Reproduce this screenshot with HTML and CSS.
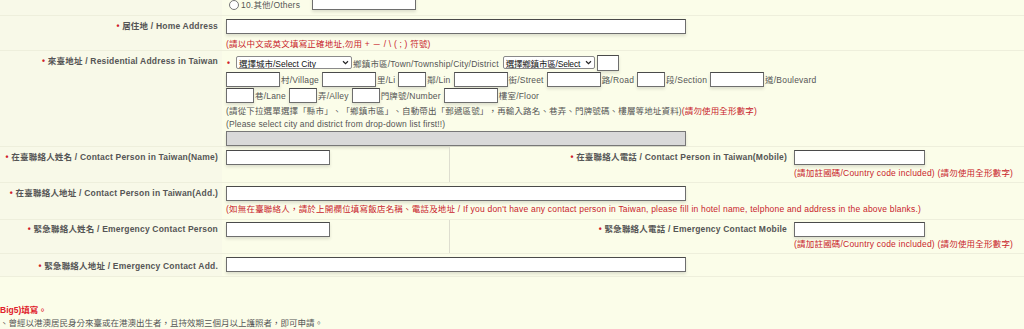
FILE: index.html
```html
<!DOCTYPE html>
<html lang="zh-Hant">
<head>
<meta charset="utf-8">
<link rel="stylesheet" href="styles.css">
</head>
<body>
<div class="form">
  <div class="row row-top">
    <div class="label"></div>
    <div class="value top-value">
      <span class="radio"></span><span class="txt">10.其他/Others</span>
      <span class="input w104 other"></span>
    </div>
  </div>

  <div class="row r-home">
    <div class="label"><span class="star">•</span> 居住地 / Home Address</div>
    <div class="value">
      <div class="input w460"></div>
      <div class="note">(請以中文或英文填寫正確地址,勿用 + － / \ ( ; ) 符號)</div>
    </div>
  </div>

  <div class="row r-res">
    <div class="label"><span class="star">•</span> 來臺地址 / Residential Address in Taiwan</div>
    <div class="value">
      <div class="line l1">
        <span class="star star-v">•</span>
        <span class="select sel-city"><span class="sel-text">選擇城市/Select City</span><svg class="chev" viewBox="0 0 8 6" width="7" height="5"><path d="M1 1.5 L4 4.5 L7 1.5" fill="none" stroke="#222" stroke-width="1.4"/></svg></span>
        <span class="txt">鄉鎮市區/Town/Township/City/District</span>
        <span class="select sel-dist"><span class="sel-text">選擇鄉鎮市區/Select</span><svg class="chev" viewBox="0 0 8 6" width="7" height="5"><path d="M1 1.5 L4 4.5 L7 1.5" fill="none" stroke="#222" stroke-width="1.4"/></svg></span>
        <span class="input w22 zip"></span>
      </div>
      <div class="line">
        <span class="input w54"></span><span class="txt">村/Village</span>
        <span class="input w54"></span><span class="txt">里/Li</span>
        <span class="input w28"></span><span class="txt">鄰/Lin</span>
        <span class="input w54"></span><span class="txt">街/Street</span>
        <span class="input w54"></span><span class="txt">路/Road</span>
        <span class="input w28"></span><span class="txt">段/Section</span>
        <span class="input w54"></span><span class="txt">道/Boulevard</span>
      </div>
      <div class="line">
        <span class="input w28"></span><span class="txt">巷/Lane</span>
        <span class="input w28"></span><span class="txt">弄/Alley</span>
        <span class="input w28"></span><span class="txt">門牌號/Number</span>
        <span class="input w54"></span><span class="txt">樓室/Floor</span>
      </div>
      <div class="help first">(請從下拉選單選擇「縣市」、「鄉鎮市區」、自動帶出「郵遞區號」，再輸入路名、巷弄、門牌號碼、樓層等地址資料)<span class="red">(請勿使用全形數字)</span></div>
      <div class="help">(Please select city and district from drop-down list first!!)</div>
      <div class="input w460 disabled"></div>
    </div>
  </div>

  <div class="row split r-contact">
    <div class="label"><span class="star">•</span> 在臺聯絡人姓名 / Contact Person in Taiwan(Name)</div>
    <div class="value"><div class="input w104"></div></div>
    <div class="label label2"><span class="star">•</span> 在臺聯絡人電話 / Contact Person in Taiwan(Mobile)</div>
    <div class="value">
      <div class="input w131"></div>
      <div class="note">(請加註國碼/Country code included) (請勿使用全形數字)</div>
    </div>
  </div>

  <div class="row r-cadd">
    <div class="label"><span class="star">•</span> 在臺聯絡人地址 / Contact Person in Taiwan(Add.)</div>
    <div class="value">
      <div class="input w460"></div>
      <div class="note">(如無在臺聯絡人，請於上開欄位填寫飯店名稱、電話及地址 / If you don't have any contact person in Taiwan, please fill in hotel name, telphone and address in the above blanks.)</div>
    </div>
  </div>

  <div class="row split r-emer">
    <div class="label"><span class="star">•</span> 緊急聯絡人姓名 / Emergency Contact Person</div>
    <div class="value"><div class="input w104"></div></div>
    <div class="label label2"><span class="star">•</span> 緊急聯絡人電話 / Emergency Contact Mobile</div>
    <div class="value">
      <div class="input w131"></div>
      <div class="note">(請加註國碼/Country code included) (請勿使用全形數字)</div>
    </div>
  </div>

  <div class="row r-eadd">
    <div class="label"><span class="star">•</span> 緊急聯絡人地址 / Emergency Contact Add.</div>
    <div class="value"><div class="input w460"></div></div>
  </div>
</div>

<div class="footer">
  <div class="foot-red">Big5)填寫。</div>
  <div class="foot-text">、曾經以港澳居民身分來臺或在港澳出生者，且持效期三個月以上護照者，即可申請。</div>
</div>
</body>
</html>
```

FILE: styles.css
```css
html, body {
  margin: 0;
  padding: 0;
}
body {
  background: #fbfde9;
  font-family: "Liberation Sans", "Noto Sans CJK TC", sans-serif;
  font-size: 8.5px;
  color: #555;
  width: 1024px;
  height: 329px;
  overflow: hidden;
}
.form {
  display: flex;
  flex-direction: column;
}
.row {
  display: grid;
  grid-template-columns: 222px 1fr;
  border-bottom: 1px solid #eeefdc;
}
.row.split {
  grid-template-columns: 222px 227px 341px 1fr;
}
.label {
  background: #f8f9e8;
  text-align: right;
  padding-right: 4px;
  font-weight: bold;
  letter-spacing: 0.2px;
  color: #555;
  line-height: 12px;
  white-space: nowrap;
}
.label2 {
  background: #fbfde9;
  border-left: 1px solid #deded0;
  padding-right: 3px;
}
.star {
  color: #d0202a;
  font-weight: bold;
}
.value {
  padding-left: 4px;
  white-space: nowrap;
}
.input {
  display: inline-block;
  flex: none;
  box-sizing: border-box;
  height: 15px;
  background: #fff;
  border: 1px solid #6e6e6e;
  border-top-color: #4a4a4a;
  box-shadow: 0 2px 3px rgba(0, 0, 0, 0.12);
  vertical-align: middle;
}
div.input { display: block; }
.w460 { width: 460px; }
.w131 { width: 131px; }
.w104 { width: 104px; }
.w54 { width: 54px; }
.w28 { width: 28px; }
.w22 { width: 22px; }
.disabled {
  background: #d9d9d9;
  border-color: #777;
}
.note {
  color: #c8232b;
  line-height: 12px;
  margin-top: 4px;
  letter-spacing: 0.2px;
}
.red { color: #c8232b; }
.txt {
  flex: none;
  padding: 0 3px 0 1px;
  letter-spacing: 0.2px;
}

/* top partial row */
.row-top {
  height: 15px;
  overflow: hidden;
}
.top-value {
  display: flex;
  align-items: flex-end;
  padding-left: 7px;
  padding-bottom: 5px;
  height: 10px;
}
.radio {
  flex: none;
  width: 8px;
  height: 8px;
  border: 1px solid #777;
  border-radius: 50%;
  background: #fff;
  margin-right: 1px;
}
.top-value .txt { line-height: 10px; }
.other {
  margin-left: 9px;
  height: 18px;
}

/* home */
.r-home { height: 34px; }
.r-home .label { padding-top: 4px; }
.r-home .value { padding-top: 3px; }

/* residential */
.r-res { height: 95px; }
.r-res .label { padding-top: 4px; }
.r-res .value { padding-top: 4px; }
.line {
  display: flex;
  align-items: center;
  height: 16px;
}
.l1 { height: 15px; margin-bottom: 1px; }
.star-v { flex: none; margin: 0 6px 0 1px; }
.select {
  display: inline-flex;
  flex: none;
  align-items: center;
  box-sizing: border-box;
  height: 13px;
  background: #fff;
  border: 1px solid #8a8a8a;
  border-radius: 2px;
  color: #111;
  font-size: 8.5px;
  padding: 0 2px 0 2px;
  overflow: hidden;
}
.sel-text {
  flex: 1;
  min-width: 0;
  white-space: nowrap;
}
.sel-city { width: 116px; }
.sel-dist { width: 92px; margin-left: 1px; }
.sel-dist .sel-text { letter-spacing: -0.2px; }
.chev { flex: none; margin-left: 1px; }
.zip { margin-left: 2px; height: 16px; }
.help {
  line-height: 13px;
  letter-spacing: 0.15px;
}
.help.first { margin-top: 2px; }
.r-res .disabled { margin-top: 0; }

/* contact */
.r-contact { height: 35px; }
.r-contact .label { padding-top: 4px; }
.r-contact .value { padding-top: 3px; }
.r-contact .note { margin-top: 2px; }

.r-cadd { height: 36px; }
.r-cadd .label { padding-top: 4px; }
.r-cadd .value { padding-top: 3px; }
.r-cadd .note { margin-top: 2px; }

.r-emer { height: 33px; }
.r-emer .label { padding-top: 3px; }
.r-emer .value { padding-top: 2px; }
.r-emer .note { margin-top: 1px; }

.r-eadd { height: 22px; }
.r-eadd .label { padding-top: 6px; }
.r-eadd .value { padding-top: 3px; }

.footer {
  padding-top: 27px;
  line-height: 13px;
}
.foot-red {
  color: #e0202a;
  font-weight: bold;
}
.foot-text {
  color: #555;
}
```
